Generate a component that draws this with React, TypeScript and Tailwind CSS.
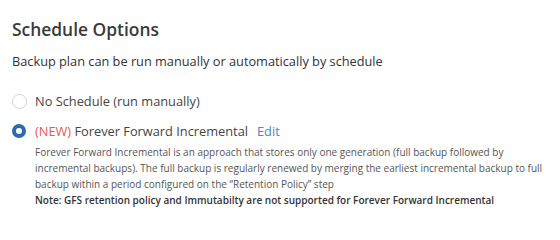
export default function App() {
  return (
    <div className="w-[560px] h-[217px] bg-white px-3 pt-[17px] font-['Open_Sans',sans-serif] text-[#333]">
      <h2 className="text-[17.4px] leading-[24px] font-semibold text-[#3a3a3a]">Schedule Options</h2>
      <p className="mt-[11px] text-[12.75px] leading-[18px] text-[#333]">
        Backup plan can be run manually or automatically by schedule
      </p>

      <div className="mt-[22px] flex items-center gap-[8px]">
        <span className="h-[15px] w-[15px] rounded-full border border-[#d4d4d4] bg-white" />
        <span className="text-[12.8px] leading-[18px] text-[#444]">No Schedule (run manually)</span>
      </div>

      <div className="mt-[12px] flex items-center gap-[9px]">
        <span className="flex h-[14px] w-[14px] items-center justify-center rounded-full bg-[#2a6ab0]">
          <span className="h-[6px] w-[6px] rounded-full bg-white" />
        </span>
        <span className="text-[12.8px] leading-[18px] text-[#444]">
          <span className="text-[#e25c4f]">(NEW)</span> Forever Forward Incremental
          <a className="ml-[9px] text-[#4a86c5]">Edit</a>
        </span>
      </div>

      <div className="ml-[23px] mt-[4px] text-[10px] leading-[16px] text-[#555]">
        <p>
          Forever Forward Incremental is an approach that stores only one generation (full backup followed by
          incremental backups). The full backup is regularly renewed by merging the earliest incremental backup to full
          backup within a period configured on the “Retention Policy” step
        </p>
        <p className="font-semibold text-[#333]">
          Note: GFS retention policy and Immutabilty are not supported for Forever Forward Incremental
        </p>
      </div>
    </div>
  );
}
